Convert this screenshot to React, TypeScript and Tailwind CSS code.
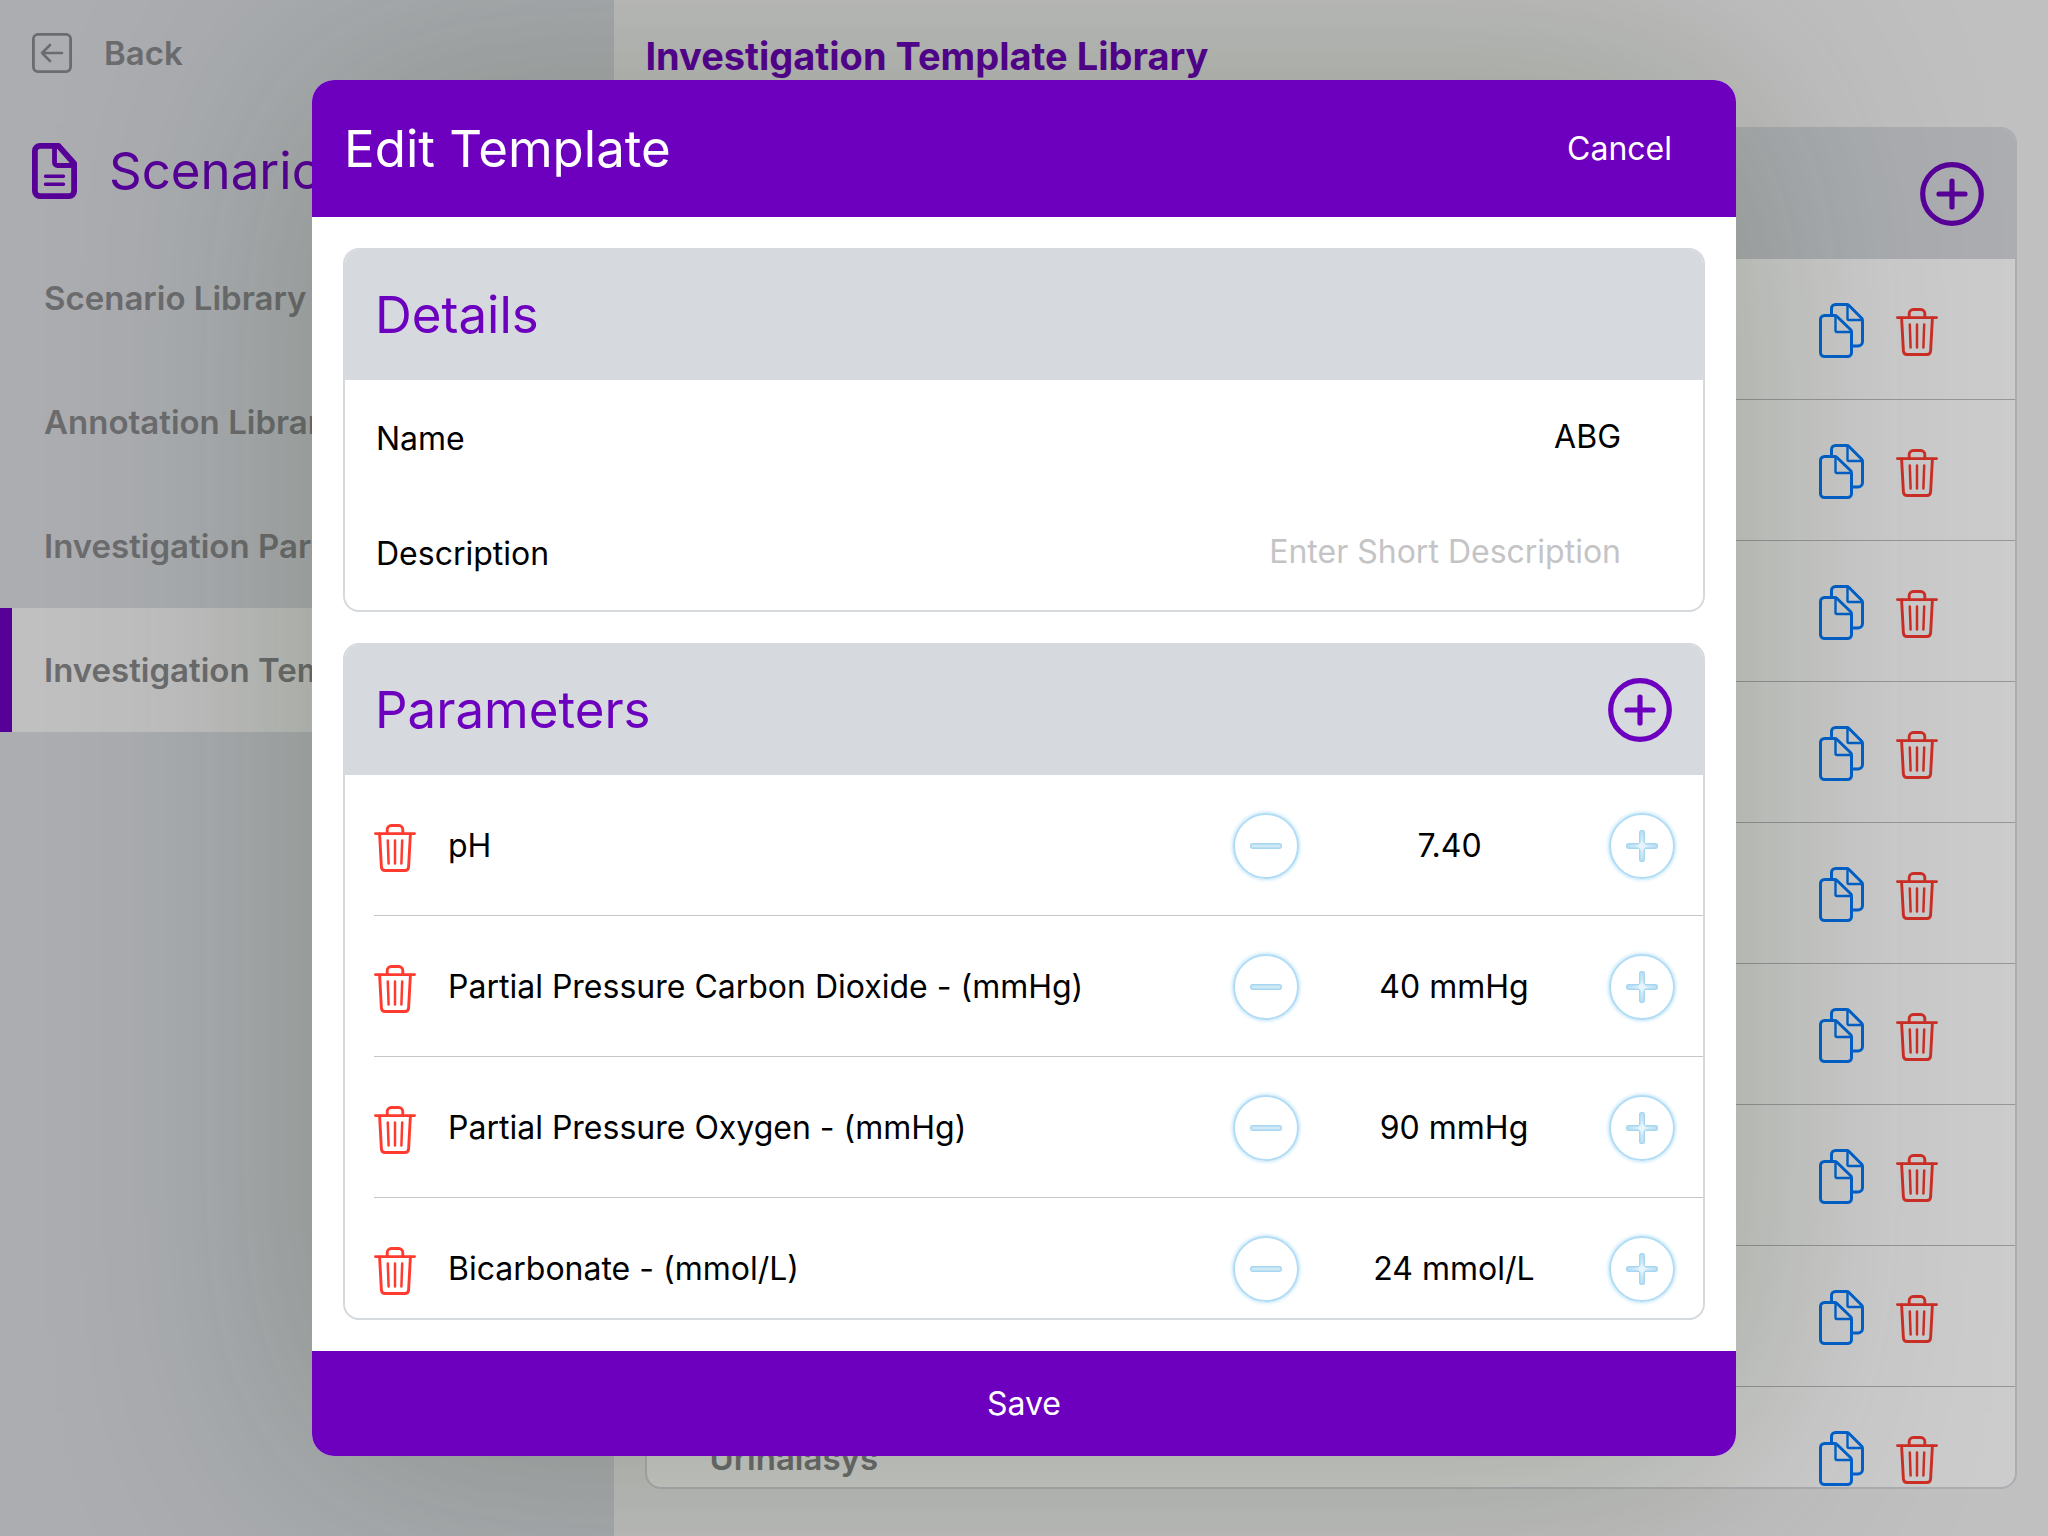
import { useState } from 'react';
import type { ReactNode } from 'react';

const navItems = ['Scenario Library', 'Annotation Library', 'Investigation Parameters', 'Investigation Templates'];

const templates = ['ABG', 'Biochemistry', 'Coagulation', 'Full Blood Count', 'Lactate', 'Liver Function', 'Troponin', 'VBG', 'Urinalasys'];

const initialParameters = [
  { name: 'pH', value: 7.4, digits: 2, step: 0.01, unit: '' },
  { name: 'Partial Pressure Carbon Dioxide - (mmHg)', value: 40, digits: 0, step: 1, unit: 'mmHg' },
  { name: 'Partial Pressure Oxygen - (mmHg)', value: 90, digits: 0, step: 1, unit: 'mmHg' },
  { name: 'Bicarbonate - (mmol/L)', value: 24, digits: 0, step: 1, unit: 'mmol/L' },
];

function BackIcon() {
  return (
    <svg className="h-10 w-10" viewBox="0 0 40 40" fill="none" stroke="currentColor" strokeWidth="2.8" strokeLinecap="round" strokeLinejoin="round">
      <rect x="1.4" y="1.4" width="37.2" height="37.2" rx="4.5" />
      <path d="M30 20H10M18 12L10 20l8 8" strokeWidth="2.6" />
    </svg>
  );
}

function DocumentIcon() {
  return (
    <svg className="h-14 w-[45px]" viewBox="0 0 45 56" fill="none" stroke="currentColor" strokeWidth="5.8" strokeLinejoin="round">
      <path d="M8 2.9H26.5L42.1 20.5V48a5.1 5.1 0 0 1-5.1 5.1H8A5.1 5.1 0 0 1 2.9 48V8A5.1 5.1 0 0 1 8 2.9Z" />
      <path d="M22.5 3V19.5a3 3 0 0 0 3 3H42" strokeWidth="4.8" />
      <path d="M13.5 33.3H31.5M13.5 41.3H31.5" strokeWidth="3.4" strokeLinecap="round" />
    </svg>
  );
}

function CopyIcon() {
  return (
    <svg className="h-[55px] w-[45px]" viewBox="0 0 45 55" fill="none" stroke="currentColor" strokeWidth="3" strokeLinejoin="round">
      <path d="M12.5 12V5.5a4 4 0 0 1 4-4H27.5q1.5 0 2.5 1L42.5 15q1 1 1 2.5V38.5a4.5 4.5 0 0 1-4.5 4.5H34" />
      <path d="M28.5 2V15.5q0 1.5 1.5 1.5H43.2" strokeWidth="2.4" />
      <path d="M5.5 12.5H15.5q1.5 0 2.5 1L31.5 26.5q1 1 1 2.5V49.5a4 4 0 0 1-4 4H5.5a4 4 0 0 1-4-4V16.5a4 4 0 0 1 4-4Z" />
      <path d="M16.5 13V27.5q0 1.5 1.5 1.5H32.4" strokeWidth="2.4" />
    </svg>
  );
}

function TrashIcon() {
  return (
    <svg className="h-12 w-[42px]" viewBox="0 0 42 48" fill="none" stroke="currentColor" strokeWidth="2.9" strokeLinecap="round" strokeLinejoin="round">
      <path d="M1.4 9.6H40.6" strokeWidth="2.7" />
      <path d="M13.2 9.3V5.5a4 4 0 0 1 4-4h7.6a4 4 0 0 1 4 4v3.8" />
      <path d="M5.6 10L7.4 43.1a3.7 3.7 0 0 0 3.7 3.4h19.8a3.7 3.7 0 0 0 3.7-3.4L36.4 10" />
      <path d="M13.8 16.5L14.6 39.5M21 16.5V39.5M28.2 16.5L27.4 39.5" strokeWidth="2.5" />
    </svg>
  );
}

function AddIcon() {
  return (
    <svg className="h-16 w-16" viewBox="0 0 64 64" fill="none" stroke="currentColor" strokeWidth="5.2" strokeLinecap="round">
      <circle cx="32" cy="32" r="29.3" />
      <path d="M19 32H45M32 19V45" />
    </svg>
  );
}

function StepButton({ kind, label, onClick }: { kind: 'minus' | 'plus'; label: string; onClick: () => void }) {
  return (
    <button
      type="button"
      aria-label={label}
      onClick={onClick}
      className="flex h-[66px] w-[66px] items-center justify-center rounded-full border-2 border-[#b0dcf5] shadow-[0_0_4px_#9fd6f3]"
    >
      <svg className="h-8 w-8" viewBox="0 0 32 32">
        <defs>
          <radialGradient id="step-plus" gradientUnits="userSpaceOnUse" cx="16" cy="16" r="16">
            <stop offset="0" stopColor="#f4fafe" />
            <stop offset="0.45" stopColor="#cde8f7" />
            <stop offset="1" stopColor="#b5ddf3" />
          </radialGradient>
        </defs>
        {kind === 'minus' ? (
          <rect x="0.7" y="13.7" width="30.6" height="4.6" rx="2" fill="#cfe9f7" stroke="#a6d6f0" strokeWidth="1.4" />
        ) : (
          <>
            <path
              d="M13.7 2.6a2 2 0 0 1 2-2h.6a2 2 0 0 1 2 2V13.7H29.4a2 2 0 0 1 2 2v.6a2 2 0 0 1-2 2H18.3V29.4a2 2 0 0 1-2 2h-.6a2 2 0 0 1-2-2V18.3H2.6a2 2 0 0 1-2-2v-.6a2 2 0 0 1 2-2H13.7Z"
              fill="url(#step-plus)"
              stroke="#a6d6f0"
              strokeWidth="1.4"
            />
            <circle cx="16" cy="16" r="3.4" fill="#e6f4fc" />
          </>
        )}
      </svg>
    </button>
  );
}

function Card({ title, action, className = '', children }: { title: string; action?: ReactNode; className?: string; children: ReactNode }) {
  return (
    <section className={`flex flex-col overflow-hidden rounded-[16px] border-2 border-[#d6d9de] bg-white ${className}`}>
      <header className="flex h-[130px] shrink-0 items-center justify-between bg-[#d6d9de] pr-[31px] pl-[30px] text-[#6d00bf]">
        <h2 className="text-[51px]">{title}</h2>
        {action}
      </header>
      {children}
    </section>
  );
}

function AddButton({ label }: { label: string }) {
  return (
    <button type="button" aria-label={label}>
      <AddIcon />
    </button>
  );
}

function Sidebar() {
  return (
    <aside className="w-[30%] shrink-0 overflow-hidden bg-[#d6d9de] pt-[33px] whitespace-nowrap text-[#87888a]">
      <button type="button" className="flex h-10 items-center gap-8 px-8 font-semibold">
        <BackIcon />
        Back
      </button>
      <div className="mt-[70px] flex h-14 items-center gap-8 px-8 text-[#6d00bf]">
        <DocumentIcon />
        <h1 className="text-[51px]">Scenario Manager</h1>
      </div>
      <nav className="mt-[37px] flex flex-col font-semibold">
        {navItems.map((item) => (
          <a
            key={item}
            href="#"
            className={
              item === 'Investigation Templates'
                ? 'flex h-[124px] items-center border-l-12 border-[#6d00bf] bg-[#f0f0f0] pl-8'
                : 'flex h-[124px] items-center border-l-12 border-transparent pl-8'
            }
          >
            {item}
          </a>
        ))}
      </nav>
    </aside>
  );
}

function TemplateLibrary() {
  return (
    <main className="flex min-w-0 flex-1 flex-col bg-[#f0f0f0] px-[31px] pb-[47px]">
      <h1 className="flex h-[127px] shrink-0 items-start pt-8 text-[38px] leading-[48px] font-bold text-[#6d00bf]">Investigation Template Library</h1>
      <Card title="Investigation Templates" action={<AddButton label="Add template" />} className="min-h-0 flex-1">
        <ul className="min-h-0 flex-1 overflow-hidden">
          {templates.map((template) => (
            <li key={template} className="flex h-[141px] items-center border-b border-[#bcbcc0] pt-0.5 pr-[77px] pl-[62px]">
              <span className="flex-1 font-semibold text-[#87888a]">{template}</span>
              <button type="button" aria-label={`Duplicate ${template}`} className="mr-8 text-[#007aff]">
                <CopyIcon />
              </button>
              <button type="button" aria-label={`Delete ${template}`} className="pt-1 text-[#ff3b30]">
                <TrashIcon />
              </button>
            </li>
          ))}
        </ul>
      </Card>
    </main>
  );
}

function EditTemplate() {
  const [name, setName] = useState('ABG');
  const [description, setDescription] = useState('');
  const [parameters, setParameters] = useState(initialParameters);

  const change = (index: number, direction: number) =>
    setParameters(parameters.map((p, i) => (i === index ? { ...p, value: p.value + p.step * direction } : p)));

  return (
    <div
      role="dialog"
      aria-label="Edit Template"
      className="flex h-full w-full max-w-[1424px] flex-col overflow-hidden rounded-[22px] bg-white text-[32px] text-black shadow-[0_0_320px_rgba(20,40,0,0.25)]"
    >
      <header className="flex h-[137px] shrink-0 items-center justify-between bg-[#6d00bf] pr-16 pl-8 text-white">
        <h1 className="text-[51px]">Edit Template</h1>
        <button type="button">Cancel</button>
      </header>
      <div className="flex min-h-0 flex-1 flex-col gap-[31px] p-[31px]">
        <Card title="Details" className="shrink-0">
          <div className="flex h-[115px] items-center pt-0.5 pr-[82px] pl-[31px]">
            <label htmlFor="name">Name</label>
            <input id="name" value={name} onChange={(e) => setName(e.target.value)} className="min-w-0 flex-1 pb-1 text-right outline-none" />
          </div>
          <div className="flex h-[115px] items-center pt-0.5 pr-[82px] pl-[31px]">
            <label htmlFor="description">Description</label>
            <input
              id="description"
              value={description}
              onChange={(e) => setDescription(e.target.value)}
              placeholder="Enter Short Description"
              className="min-w-0 flex-1 pb-1 text-right outline-none placeholder:text-[#c4c4c6]"
            />
          </div>
        </Card>
        <Card title="Parameters" action={<AddButton label="Add parameter" />} className="min-h-0 flex-1">
          <ul className="min-h-0 flex-1 overflow-hidden pl-[29px]">
            {parameters.map((p, i) => (
              <li key={p.name} className="flex h-[141px] items-center border-b border-[#c6c6c8] pt-0.5 pr-7">
                <button type="button" aria-label={`Delete ${p.name}`} className="pt-1 text-[#ff3b30]">
                  <TrashIcon />
                </button>
                <span className="flex-1 pl-8">{p.name}</span>
                <div className="flex w-[442px] items-center justify-between">
                  <StepButton kind="minus" label={`Decrease ${p.name}`} onClick={() => change(i, -1)} />
                  <span className="whitespace-pre">{`${p.value.toFixed(p.digits)} ${p.unit}`}</span>
                  <StepButton kind="plus" label={`Increase ${p.name}`} onClick={() => change(i, 1)} />
                </div>
              </li>
            ))}
          </ul>
        </Card>
      </div>
      <button type="button" className="h-[105px] shrink-0 bg-[#6d00bf] text-white">
        Save
      </button>
    </div>
  );
}

export default function App() {
  return (
    <div className="relative flex h-screen overflow-hidden font-['Inter','Liberation_Sans',sans-serif] text-[33px] leading-[40px]">
      <Sidebar />
      <TemplateLibrary />
      <div className="absolute inset-0 flex justify-center bg-black/20 py-20">
        <EditTemplate />
      </div>
    </div>
  );
}
